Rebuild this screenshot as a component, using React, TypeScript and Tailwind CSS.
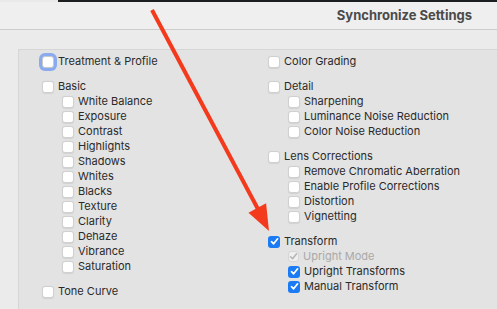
import React from 'react';

type Item = { label: string; sub?: boolean; checked?: boolean; disabled?: boolean; focus?: boolean };

const leftSections: Item[][] = [
  [{ label: 'Treatment & Profile', focus: true }],
  [
    { label: 'Basic' },
    { label: 'White Balance', sub: true },
    { label: 'Exposure', sub: true },
    { label: 'Contrast', sub: true },
    { label: 'Highlights', sub: true },
    { label: 'Shadows', sub: true },
    { label: 'Whites', sub: true },
    { label: 'Blacks', sub: true },
    { label: 'Texture', sub: true },
    { label: 'Clarity', sub: true },
    { label: 'Dehaze', sub: true },
    { label: 'Vibrance', sub: true },
    { label: 'Saturation', sub: true },
  ],
  [{ label: 'Tone Curve' }],
];

const rightSections: Item[][] = [
  [{ label: 'Color Grading' }],
  [
    { label: 'Detail' },
    { label: 'Sharpening', sub: true },
    { label: 'Luminance Noise Reduction', sub: true },
    { label: 'Color Noise Reduction', sub: true },
  ],
  [
    { label: 'Lens Corrections' },
    { label: 'Remove Chromatic Aberration', sub: true },
    { label: 'Enable Profile Corrections', sub: true },
    { label: 'Distortion', sub: true },
    { label: 'Vignetting', sub: true },
  ],
  [
    { label: 'Transform', checked: true },
    { label: 'Upright Mode', sub: true, checked: true, disabled: true },
    { label: 'Upright Transforms', sub: true, checked: true },
    { label: 'Manual Transform', sub: true, checked: true },
  ],
];

function Check({ item }: { item: Item }) {
  if (item.disabled) {
    return (
      <span className="flex h-[11px] w-[11px] items-center justify-center rounded-[3px] border border-[#d6d6d6] bg-[#efefef]">
        <svg width="9" height="9" viewBox="0 0 9 9"><path d="M1.5 4.7 L3.6 6.8 L7.6 1.8" fill="none" stroke="#b4b4b4" strokeWidth="1.5" strokeLinecap="round" strokeLinejoin="round" /></svg>
      </span>
    );
  }
  if (item.checked) {
    return (
      <span className="flex h-[12px] w-[12px] items-center justify-center rounded-[3px] bg-[#1b7bf5]">
        <svg width="9" height="9" viewBox="0 0 9 9"><path d="M1.5 4.7 L3.6 6.8 L7.6 1.8" fill="none" stroke="#ffffff" strokeWidth="1.7" strokeLinecap="round" strokeLinejoin="round" /></svg>
      </span>
    );
  }
  if (item.focus) {
    return <span className="h-[12px] w-[12px] rounded-[3px] border border-[#c9c9c9] bg-white shadow-[0_0_0_3px_#8aaaf0]" />;
  }
  return <span className="h-[12px] w-[12px] rounded-[3px] border border-[#d0d0d0] bg-white shadow-[0_0.5px_1px_rgba(0,0,0,0.08)]" />;
}

function Row({ item }: { item: Item }) {
  return (
    <div className={`flex h-[15px] items-center gap-[4px] ${item.sub ? 'pl-[20px]' : ''}`}>
      <Check item={item} />
      <span className={`whitespace-nowrap ${item.disabled ? 'text-[#a9a9a9]' : 'text-[#2a2a2a]'}`}>{item.label}</span>
    </div>
  );
}

function Column({ sections }: { sections: Item[][] }) {
  return (
    <div className="flex flex-col gap-[10px]">
      {sections.map((s, i) => (
        <div key={i} className="flex flex-col">
          {s.map((it) => <Row key={it.label} item={it} />)}
        </div>
      ))}
    </div>
  );
}

export default function App() {
  return (
    <div className="relative h-[309px] w-[497px] overflow-hidden bg-[#ebebeb] text-[11px]" style={{ fontFamily: 'Inter, "Noto Sans", sans-serif' }}>
      <div className="flex h-[2px]">
        <div className="w-[58px] bg-[#e9e9e9]" />
        <div className="flex-1 bg-[#1c1f21]" />
      </div>
      <div className="flex h-[28px] items-center justify-end border-b border-[#cdcdcd] bg-[#efefef] pr-[25px]">
        <span className="text-[13px] font-bold text-[#4a4a4a]">Synchronize Settings</span>
      </div>
      <div className="h-[19px]" />
      <div className="ml-[18px] h-[260px] border-l border-t border-[#d6d6d6] bg-[#e3e3e3] pl-[23px] pt-[4px]">
        <div className="grid grid-cols-[226px_1fr]">
          <Column sections={leftSections} />
          <Column sections={rightSections} />
        </div>
      </div>
      <svg className="pointer-events-none absolute left-0 top-0" width="497" height="309" viewBox="0 0 497 309">
        <line x1="152" y1="10" x2="259" y2="211" stroke="#f43a1d" strokeWidth="4" />
        <polygon points="269,231 248.5,212.7 266.1,203.3" fill="#f43a1d" />
      </svg>
    </div>
  );
}
